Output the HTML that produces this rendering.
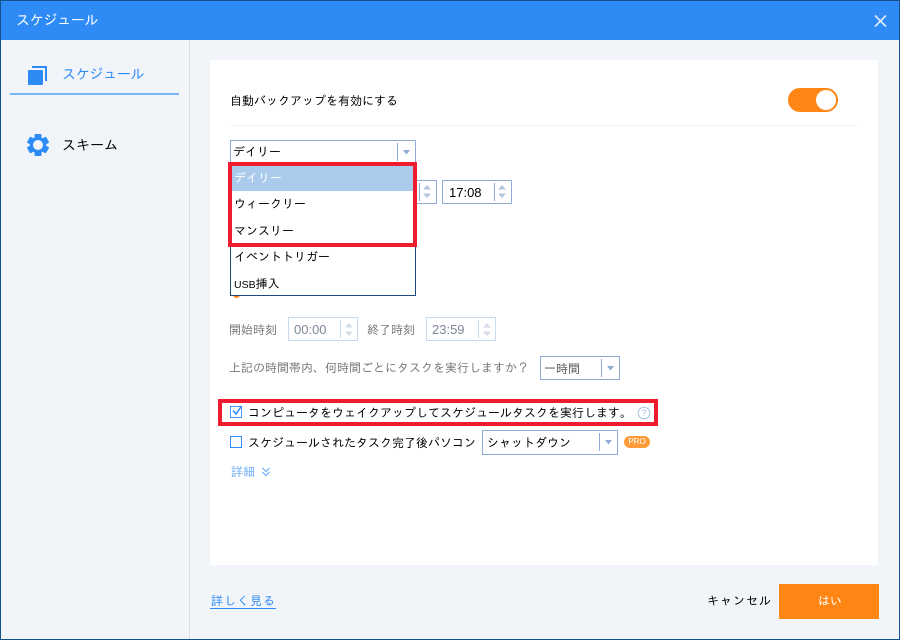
<!DOCTYPE html>
<html lang="ja">
<head>
<meta charset="utf-8">
<style>
html,body{margin:0;padding:0;width:900px;height:640px;overflow:hidden;background:#f1f5fa}
body{position:relative;font-family:"IPAGothic","Liberation Sans","Noto Sans CJK JP",sans-serif;font-size:12px;color:#000}
div,span,svg{position:absolute;box-sizing:border-box}
span.n{position:static}
.t{white-space:nowrap;line-height:16px;height:16px}
.box{background:#fff;border:1px solid #8eabd6}
.light{border-color:#c9d9ee}
.sep{width:1px;background:#8eabd6}
.sepl{width:1px;background:#c9d9ee}
.grey{color:#777}
</style>
</head>
<body>
<div style="left:0;top:0;width:900px;height:640px;border:1px solid #14508c;z-index:9;pointer-events:none"></div>
<div style="left:0;top:0;width:900px;height:40px;background:#2e8bf6"></div>
<div class="t" style="left:16px;top:12px;color:#fff;font-size:14px;letter-spacing:-.3px">スケジュール</div>
<svg style="left:873px;top:14px" width="15" height="14" viewBox="0 0 15 14"><path d="M2 1.5L13 12.5M13 1.5L2 12.5" stroke="#dbe9fc" stroke-width="1.7" fill="none"/></svg>

<div style="left:189px;top:40px;width:1px;height:599px;background:#d9dee4"></div>
<svg style="left:27px;top:65px" width="21" height="21" viewBox="0 0 21 21"><rect x="1" y="5" width="15" height="15" rx="1" fill="#2e8bf6"/><path d="M5 2H19V16" fill="none" stroke="#2e8bf6" stroke-width="2"/></svg>
<div class="t" style="left:62px;top:66px;color:#2e8bf6;font-size:14px;letter-spacing:-.3px">スケジュール</div>
<div style="left:10px;top:93px;width:169px;height:2px;background:#7ab4f8"></div>
<svg style="left:27px;top:134px" width="22" height="22" viewBox="0 0 22 22"><g fill="#2e8bf6"><circle cx="11" cy="11" r="8.2"/><rect x="7.5" y="0" width="7" height="5" rx="1"/><rect x="7.5" y="17" width="7" height="5" rx="1"/><rect x="7.5" y="0" width="7" height="5" rx="1" transform="rotate(60 11 11)"/><rect x="7.5" y="17" width="7" height="5" rx="1" transform="rotate(60 11 11)"/><rect x="7.5" y="0" width="7" height="5" rx="1" transform="rotate(120 11 11)"/><rect x="7.5" y="17" width="7" height="5" rx="1" transform="rotate(120 11 11)"/></g><circle cx="11" cy="11" r="5" fill="#f1f5fa"/></svg>
<div class="t" style="left:62px;top:137px;font-size:14px">スキーム</div>

<div style="left:210px;top:60px;width:668px;height:505px;background:#fff"></div>
<div class="t" style="left:230px;top:93px">自動バックアップを有効にする</div>
<div style="left:788px;top:88px;width:50px;height:24px;border-radius:12px;background:#ff8614"></div>
<div style="left:816px;top:90px;width:20px;height:20px;border-radius:50%;background:#fff"></div>
<div style="left:230px;top:125px;width:628px;height:1px;background:#f1f2f4"></div>

<!-- combo -->
<div class="box" style="left:230px;top:140px;width:186px;height:26px"></div>
<div class="t" style="left:233px;top:144px">デイリー</div>
<div class="sep" style="left:397px;top:143px;height:18px"></div>
<svg style="left:403px;top:150px" width="8" height="5"><path d="M0 0H7L3.5 4.5Z" fill="#8eabd6"/></svg>

<!-- spin behind dropdown -->
<div class="box" style="left:400px;top:180px;width:37px;height:24px"></div>
<div class="sep" style="left:419px;top:183px;height:18px"></div>
<svg style="left:423px;top:185px" width="8" height="13"><path d="M4 0L8 4.5H0ZM0 8.5H8L4 13Z" fill="#b4c6e2"/></svg>
<div class="box" style="left:442px;top:180px;width:70px;height:24px"></div>
<div class="t" style="left:449px;top:185px;font-family:'Liberation Sans',sans-serif;font-size:13px;line-height:15px">17:08</div>
<div class="sep" style="left:494px;top:183px;height:18px"></div>
<svg style="left:498px;top:185px" width="8" height="13"><path d="M4 0L8 4.5H0ZM0 8.5H8L4 13Z" fill="#b4c6e2"/></svg>

<!-- orange remnant -->
<div style="left:233px;top:294px;width:7px;height:4px;border-radius:0 0 4px 4px;background:#ff8614"></div>

<!-- dropdown -->
<div style="left:230px;top:164px;width:186px;height:132px;background:#fff;border:1px solid #1f4a7d"></div>
<div style="left:232px;top:166px;width:181px;height:25px;background:#aacbeb"></div>
<div class="t" style="left:234px;top:170px;color:#fff">デイリー</div>
<div class="t" style="left:234px;top:196px">ウィークリー</div>
<div class="t" style="left:234px;top:223px">マンスリー</div>
<div class="t" style="left:234px;top:249px">イベントトリガー</div>
<div class="t" style="left:234px;top:276px"><span class="n" style="font-family:'Liberation Sans',sans-serif;font-size:10.5px">USB</span>挿入</div>
<div style="left:228px;top:162px;width:189px;height:85px;border:4px solid #ee1c2e"></div>

<!-- times -->
<div class="t grey" style="left:229px;top:322px">開始時刻</div>
<div class="box light" style="left:288px;top:317px;width:70px;height:24px"></div>
<div class="t" style="left:294px;top:322px;color:#7f8896;font-family:'Liberation Sans',sans-serif;font-size:13px;line-height:15px">00:00</div>
<div class="sepl" style="left:340px;top:320px;height:18px"></div>
<svg style="left:345px;top:323px" width="8" height="13"><path d="M4 0L8 4.5H0ZM0 8.5H8L4 13Z" fill="#d3dce8"/></svg>
<div class="t grey" style="left:367px;top:322px">終了時刻</div>
<div class="box light" style="left:426px;top:317px;width:70px;height:24px"></div>
<div class="t" style="left:432px;top:322px;color:#7f8896;font-family:'Liberation Sans',sans-serif;font-size:13px;line-height:15px">23:59</div>
<div class="sepl" style="left:478px;top:320px;height:18px"></div>
<svg style="left:483px;top:323px" width="8" height="13"><path d="M4 0L8 4.5H0ZM0 8.5H8L4 13Z" fill="#d3dce8"/></svg>

<div class="t grey" style="left:229px;top:360px">上記の時間帯内、何時間ごとにタスクを実行しますか？</div>
<div class="box" style="left:540px;top:356px;width:80px;height:24px"></div>
<div class="t" style="left:544px;top:361px;color:#555">一時間</div>
<div class="sep" style="left:601px;top:359px;height:18px"></div>
<svg style="left:607px;top:366px" width="8" height="5"><path d="M0 0H7L3.5 4.5Z" fill="#8eabd6"/></svg>

<!-- wake -->
<div style="left:218px;top:399px;width:440px;height:27px;border:4px solid #ee1c2e"></div>
<div style="left:230px;top:406px;width:12px;height:12px;border:1px solid #4a9af5;background:#fff"></div>
<svg style="left:231px;top:404px" width="12" height="12" viewBox="0 0 12 12"><path d="M2 6.5L5 10L10.5 2" fill="none" stroke="#2e8bf6" stroke-width="1.5"/></svg>
<div class="t" style="left:248px;top:405px">コンピュータをウェイクアップしてスケジュールタスクを実行します。</div>
<svg style="left:637px;top:406px" width="14" height="14" viewBox="0 0 14 14"><circle cx="7" cy="7" r="5.8" fill="none" stroke="#a9bedf" stroke-width="1"/><text x="7" y="10.2" text-anchor="middle" font-family="Liberation Sans,sans-serif" font-size="9" fill="#a9bedf">?</text></svg>

<div style="left:230px;top:436px;width:12px;height:12px;border:1px solid #2e8bf6;background:#fff"></div>
<div class="t" style="left:248px;top:435px">スケジュールされたタスク完了後パソコン</div>
<div class="box" style="left:482px;top:430px;width:136px;height:25px"></div>
<div class="t" style="left:487px;top:435px">シャットダウン</div>
<div class="sep" style="left:599px;top:433px;height:18px"></div>
<svg style="left:605px;top:440px" width="8" height="5"><path d="M0 0H7L3.5 4.5Z" fill="#8eabd6"/></svg>
<div style="left:624px;top:436px;width:26px;height:12px;border-radius:6px;background:#ff9a38"></div>
<div class="t" style="left:624px;top:436px;width:26px;height:12px;line-height:12px;text-align:center;color:#fff;font-size:8px;font-family:'Liberation Sans',sans-serif">PRO</div>

<div class="t" style="left:231px;top:464px;color:#6fb0f5">詳細</div>
<svg style="left:261px;top:467px" width="10" height="10" viewBox="0 0 10 10"><path d="M1.5 1L5 4.5L8.5 1M1.5 5L5 8.5L8.5 5" fill="none" stroke="#6fb0f5" stroke-width="1.2"/></svg>

<!-- footer -->
<div class="t" style="left:211px;top:593px;color:#2e8bf6;letter-spacing:1px">詳しく見る</div>
<div style="left:210px;top:608px;width:66px;height:1px;background:#2e8bf6"></div>
<div class="t" style="left:707px;top:593px;letter-spacing:1px">キャンセル</div>
<div style="left:779px;top:584px;width:100px;height:35px;background:#ff8614"></div>
<div class="t" style="left:780px;top:593px;width:100px;text-align:center;color:#fff">はい</div>
</body>
</html>
